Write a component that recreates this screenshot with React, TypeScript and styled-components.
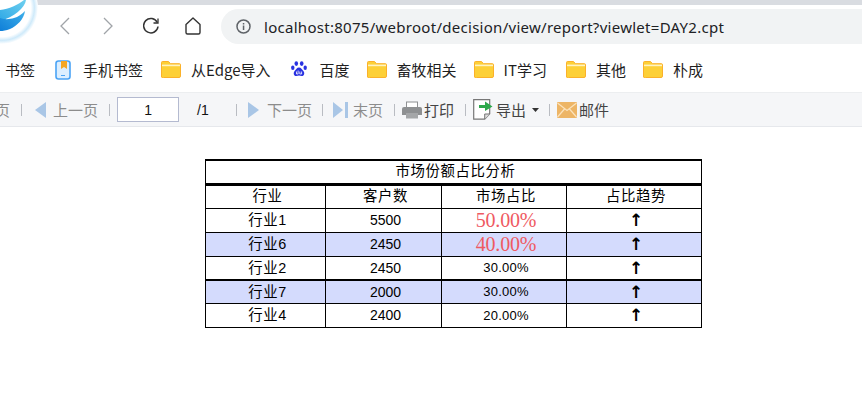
import React from "react";
import styled, { createGlobalStyle } from "styled-components";

const CJK = `"Noto Sans CJK SC", "Noto Sans", sans-serif`;

const GlobalStyle = createGlobalStyle`
  html, body {
    margin: 0;
    padding: 0;
    background: #fff;
    overflow: hidden;
  }
  body {
    font-family: ${CJK};
    color: #222;
  }
`;

const Page = styled.div`
  position: relative;
  width: 862px;
  height: 413px;
  overflow: hidden;
`;

const TopStrip = styled.div`
  height: 5px;
  background: #d9dce1;
`;

const LogoWrap = styled.div`
  position: absolute;
  left: 0;
  top: 0;
  width: 40px;
  height: 46px;
`;

const NavBar = styled.div`
  height: 41px;
  display: flex;
  align-items: center;
  padding: 1px 0 0 60px;
  box-sizing: border-box;
`;

const NavIcon = styled.svg<{ $gap: number }>`
  flex: none;
  margin-right: ${(p) => p.$gap}px;
`;

const AddressPill = styled.div`
  flex: 1;
  height: 35px;
  margin-top: 1px;
  display: flex;
  align-items: center;
  gap: 13px;
  padding-left: 15px;
  background: #f1f3f4;
  border-radius: 18px 0 0 18px;
`;

const Url = styled.span`
  font-family: "Noto Sans", sans-serif;
  font-size: 15px;
  letter-spacing: 0.28px;
  color: #202124;
  white-space: nowrap;
`;

const BookmarkBar = styled.div`
  height: 46px;
  display: flex;
  align-items: center;
  padding: 1px 0 0 5px;
  box-sizing: border-box;
`;

const Bookmark = styled.div<{ $after: number; $gap?: number }>`
  display: flex;
  align-items: center;
  gap: ${(p) => p.$gap ?? 10}px;
  margin-right: ${(p) => p.$after}px;
  font-size: 15px;
  line-height: 20px;
  color: #1f1f1f;
  white-space: nowrap;
`;

const Toolbar = styled.div`
  height: 35px;
  display: flex;
  align-items: center;
  box-sizing: border-box;
  background: #f5f6f8;
  border-top: 1px solid #eceef0;
  border-bottom: 1px solid #e6e8ec;
  font-size: 15px;
  white-space: nowrap;
`;

const ClippedPage = styled.span`
  margin-left: -20px;
  color: #8c8c8c;
`;

const Sep = styled.span<{ $left: number; $right: number }>`
  flex: none;
  width: 1px;
  height: 12px;
  background: #b9bcc2;
  margin: 0 ${(p) => p.$right}px 0 ${(p) => p.$left}px;
`;

const ToolLabel = styled.span<{ $active?: boolean; $left: number }>`
  margin-left: ${(p) => p.$left}px;
  color: ${(p) => (p.$active ? "#444" : "#8c8c8c")};
`;

const PageInput = styled.div`
  flex: none;
  width: 62px;
  height: 25px;
  box-sizing: border-box;
  border: 1px solid #b4bad0;
  background: #fff;
  display: flex;
  align-items: center;
  justify-content: center;
  font-family: "Liberation Sans", sans-serif;
  font-size: 14px;
  color: #111;
`;

const PageTotal = styled.span`
  margin-left: 18px;
  font-family: "Liberation Sans", sans-serif;
  font-size: 14px;
  color: #111;
  width: 39px;
`;

const ToolIcon = styled.svg<{ $left?: number }>`
  flex: none;
  margin-left: ${(p) => p.$left ?? 0}px;
`;

const ReportArea = styled.div`
  padding: 32px 0 0 205px;
`;

const Report = styled.table`
  width: 497px;
  table-layout: fixed;
  border-collapse: separate;
  border-spacing: 0;
  border-top: 2px solid #000;
  border-left: 1px solid #000;
  box-sizing: border-box;
  font-family: "Liberation Sans", ${CJK};
  color: #000;
`;

const Row = styled.tr<{ $h: number; $tint?: boolean; $rule?: number }>`
  height: ${(p) => p.$h}px;
  background: ${(p) => (p.$tint ? "#d4dbfd" : "#fff")};

  th,
  td {
    padding: 0 0 1px 4px;
    box-sizing: border-box;
    height: ${(p) => p.$h}px;
    text-align: center;
    font-size: 14.4px;
    font-weight: 400;
    letter-spacing: 0.6px;
    line-height: 18px;
    border-right: 1px solid #000;
    border-bottom: ${(p) => p.$rule ?? 1}px solid #000;
  }

  th {
    padding-bottom: 2px;
  }
`;

const Num = styled.span`
  font-size: 14px;
  letter-spacing: 0;
`;

const Share = styled.span<{ $big?: boolean }>`
  display: inline-block;
  padding-top: ${(p) => (p.$big ? 2 : 0)}px;
  font-family: ${(p) => (p.$big ? `"Liberation Serif", serif` : `"Liberation Sans", sans-serif`)};
  font-size: ${(p) => (p.$big ? 20 : 13)}px;
  letter-spacing: ${(p) => (p.$big ? -0.2 : 0.2)}px;
  color: ${(p) => (p.$big ? "#ef5a62" : "#000")};
`;

const Arrow = styled.span`
  display: inline-block;
  padding-top: 1px;
  font-family: "DejaVu Sans", sans-serif;
  font-size: 17px;
  font-weight: 700;
  letter-spacing: 0;
`;

const Folder = () => (
  <svg width="20" height="17" viewBox="0 0 20 17">
    <path d="M1.5 0.5h6l2 2.2h9a1 1 0 0 1 1 1v11.3a1.5 1.5 0 0 1-1.5 1.5h-15A1.5 1.5 0 0 1 .5 15V1.5a1 1 0 0 1 1-1z" fill="#fdd037" stroke="#fbb12a" />
    <rect x="1" y="3.6" width="18" height="1.6" fill="#fff3c4" />
  </svg>
);

const MobileBook = () => (
  <svg width="16" height="20" viewBox="0 0 16 20">
    <rect x="1" y="1" width="14" height="18" rx="2.5" fill="#dbeeff" stroke="#4aa3f5" strokeWidth="1.6" />
    <path d="M6 1h6v8l-3-2-3 2z" fill="#f5a623" />
    <rect x="6" y="15" width="4" height="1" fill="#4aa3f5" />
  </svg>
);

const BaiduPaw = () => (
  <svg width="16" height="17" viewBox="0 0 16 17" fill="#2932e1">
    <ellipse cx="5.3" cy="2.6" rx="1.8" ry="2.3" />
    <ellipse cx="10.7" cy="2.6" rx="1.8" ry="2.3" />
    <ellipse cx="1.8" cy="6.8" rx="1.7" ry="2.2" />
    <ellipse cx="14.2" cy="6.8" rx="1.7" ry="2.2" />
    <path d="M8 6.5c2.2 0 3 2 4.2 3.2 1.6 1.5 1.6 5.3-1.6 5.3-1 0-1.6-.4-2.6-.4s-1.6.4-2.6.4c-3.2 0-3.2-3.8-1.6-5.3C5 8.5 5.8 6.5 8 6.5z" />
    <path d="M5.5 10.5V13h1.6V9.5M8.8 10.5V13h1.8v-2.5" fill="none" stroke="#fff" strokeWidth=".8" />
  </svg>
);

const Logo = () => (
  <svg width="40" height="46" viewBox="0 0 40 46">
    <defs>
      <radialGradient id="glow">
        <stop offset="0.8" stopColor="#ffffff" />
        <stop offset="0.9" stopColor="#cfeafa" />
        <stop offset="1" stopColor="#ffffff" />
      </radialGradient>
      <linearGradient id="upper" x1="0" y1="1" x2="1" y2="0">
        <stop offset="0" stopColor="#2fa8e6" />
        <stop offset="1" stopColor="#6fd0ef" />
      </linearGradient>
      <linearGradient id="lower" x1="0" y1="1" x2="1" y2="0">
        <stop offset="0" stopColor="#0f7fd8" />
        <stop offset="1" stopColor="#3fb0ea" />
      </linearGradient>
    </defs>
    <circle cx="2" cy="8" r="36" fill="url(#glow)" />
    <path d="M0 10C9 9 18 5 24 0h2C25 8 14 17 0 21z" fill="url(#upper)" />
    <path d="M0 18C6 20 10 19 14 18 18 17 22 14 25 11 24 19 17 26 10 29 6 30.5 3 31 0 31z" fill="url(#lower)" />
  </svg>
);

const rows = [
  { name: "行业1", count: "5500", share: "50.00%", big: true, h: 24 },
  { name: "行业6", count: "2450", share: "40.00%", big: true, tint: true, h: 24 },
  { name: "行业2", count: "2450", share: "30.00%", h: 24, rule: 2 },
  { name: "行业7", count: "2000", share: "30.00%", tint: true, h: 23 },
  { name: "行业4", count: "2400", share: "20.00%", h: 24 },
];

const bookmarks = [
  { label: "百度", icon: <BaiduPaw />, after: 17, gap: 13 },
  { label: "畜牧相关", icon: <Folder />, after: 17 },
  { label: "IT学习", icon: <Folder />, after: 19 },
  { label: "其他", icon: <Folder />, after: 17 },
  { label: "朴成", icon: <Folder />, after: 0 },
];

export default function App() {
  return (
    <Page>
      <GlobalStyle />
      <TopStrip />
      <NavBar>
        <NavIcon $gap={33} width="10" height="18" viewBox="0 0 10 18" fill="none" stroke="#a0a4a8" strokeWidth="1.3">
          <path d="M9 1 1 9l8 8" />
        </NavIcon>
        <NavIcon $gap={30} width="10" height="18" viewBox="0 0 10 18" fill="none" stroke="#a0a4a8" strokeWidth="1.3">
          <path d="m1 1 8 8-8 8" />
        </NavIcon>
        <NavIcon $gap={26} width="16" height="18" viewBox="0 0 16 18" fill="none" stroke="#333" strokeWidth="1.5">
          <path d="M14.3 5.5A7.2 7.2 0 1 0 15 9.5" />
          <path d="M15 1.5V6h-4.500" strokeWidth="1.3" />
        </NavIcon>
        <NavIcon $gap={20} width="16" height="18" viewBox="0 0 16 18" fill="none" stroke="#333" strokeWidth="1.4" strokeLinejoin="round">
          <path d="M8 1 1 7.5v8A1.5 1.5 0 0 0 2.500 17h11a1.500 1.500 0 0 0 1.500-1.500v-8z" />
        </NavIcon>
        <AddressPill>
          <svg width="15" height="15" viewBox="0 0 15 15" fill="none">
            <circle cx="7.5" cy="7.5" r="6.5" stroke="#5f6368" strokeWidth="1.5" />
            <rect x="6.8" y="6.5" width="1.5" height="4.5" fill="#5f6368" />
            <rect x="6.8" y="4" width="1.5" height="1.5" fill="#5f6368" />
          </svg>
          <Url>localhost:8075/webroot/decision/view/report?viewlet=DAY2.cpt</Url>
        </AddressPill>
      </NavBar>
      <BookmarkBar>
        <Bookmark $after={20}>书签</Bookmark>
        <Bookmark $after={18} $gap={12}>
          <MobileBook />
          手机书签
        </Bookmark>
        <Bookmark $after={20}>
          <Folder />
          从Edge导入
        </Bookmark>
        {bookmarks.map((b) => (
          <Bookmark key={b.label} $after={b.after} $gap={b.gap}>
            {b.icon}
            {b.label}
          </Bookmark>
        ))}
      </BookmarkBar>
      <Toolbar>
        <ClippedPage>首页</ClippedPage>
        <Sep $left={11} $right={13} />
        <ToolIcon width="11" height="16" viewBox="0 0 11 16">
          <path d="M11 0v16L0 8z" fill="#a9c6e6" />
        </ToolIcon>
        <ToolLabel $left={7}>上一页</ToolLabel>
        <Sep $left={11} $right={7} />
        <PageInput>1</PageInput>
        <PageTotal>/1</PageTotal>
        <Sep $left={0} $right={11} />
        <ToolIcon width="11" height="16" viewBox="0 0 11 16">
          <path d="M0 0v16l11-8z" fill="#a9c6e6" />
        </ToolIcon>
        <ToolLabel $left={8}>下一页</ToolLabel>
        <Sep $left={10} $right={10} />
        <ToolIcon width="16" height="16" viewBox="0 0 16 16">
          <path d="M0 0v16l10-8z" fill="#a9c6e6" />
          <rect x="12" y="0" width="3" height="16" fill="#a9c6e6" />
        </ToolIcon>
        <ToolLabel $left={4}>末页</ToolLabel>
        <Sep $left={11} $right={7} />
        <ToolIcon width="20" height="18" viewBox="0 0 20 18">
          <rect x="4.5" y="1" width="11" height="6" fill="#fff" stroke="#8e9092" />
          <path d="M2 6h16a2 2 0 0 1 2 2v6H0V8a2 2 0 0 1 2-2z" fill="#8e9092" />
          <rect x="4" y="12" width="12" height="5.5" fill="#a4a6a8" />
        </ToolIcon>
        <ToolLabel $left={2} $active>打印</ToolLabel>
        <Sep $left={11} $right={7} />
        <ToolIcon width="20" height="21" viewBox="0 0 20 21">
          <path d="M.7.7h16v14l-5 5.500H.7z" fill="#fff" stroke="#777" strokeWidth="1.2" />
          <path d="M11.700 20v-5h5" fill="#ddd" stroke="#777" />
          <path d="M6 6h6V2.500L19.500 7.500 12 12V9H6z" fill="#2ea84b" />
        </ToolIcon>
        <ToolLabel $left={3} $active>导出</ToolLabel>
        <ToolIcon $left={6} width="7" height="4" viewBox="0 0 7 4">
          <path d="M0 0h7L3.500 4z" fill="#333" />
        </ToolIcon>
        <Sep $left={10} $right={7} />
        <ToolIcon width="20" height="16" viewBox="0 0 20 16">
          <rect width="20" height="16" rx="1" fill="#edb566" />
          <path d="M.5 1 10 8.500 19.500 1M.5 15 7.500 7M19.500 15l-7-8" fill="none" stroke="#fbe3bd" strokeWidth="1.2" />
        </ToolIcon>
        <ToolLabel $left={2} $active>邮件</ToolLabel>
      </Toolbar>
      <ReportArea>
        <Report>
          <colgroup>
            <col width="120" />
            <col width="116" />
            <col width="125" />
            <col width="135" />
          </colgroup>
          <thead>
            <Row $h={25} $rule={3}>
              <th colSpan={4}>市场份额占比分析</th>
            </Row>
            <Row $h={23}>
              <th>行业</th>
              <th>客户数</th>
              <th>市场占比</th>
              <th>占比趋势</th>
            </Row>
          </thead>
          <tbody>
            {rows.map((r) => (
              <Row key={r.name} $h={r.h} $tint={r.tint} $rule={r.rule}>
                <td>{r.name}</td>
                <td>
                  <Num>{r.count}</Num>
                </td>
                <td>
                  <Share $big={r.big}>{r.share}</Share>
                </td>
                <td>
                  <Arrow>↑</Arrow>
                </td>
              </Row>
            ))}
          </tbody>
        </Report>
      </ReportArea>
      <LogoWrap>
        <Logo />
      </LogoWrap>
    </Page>
  );
}
